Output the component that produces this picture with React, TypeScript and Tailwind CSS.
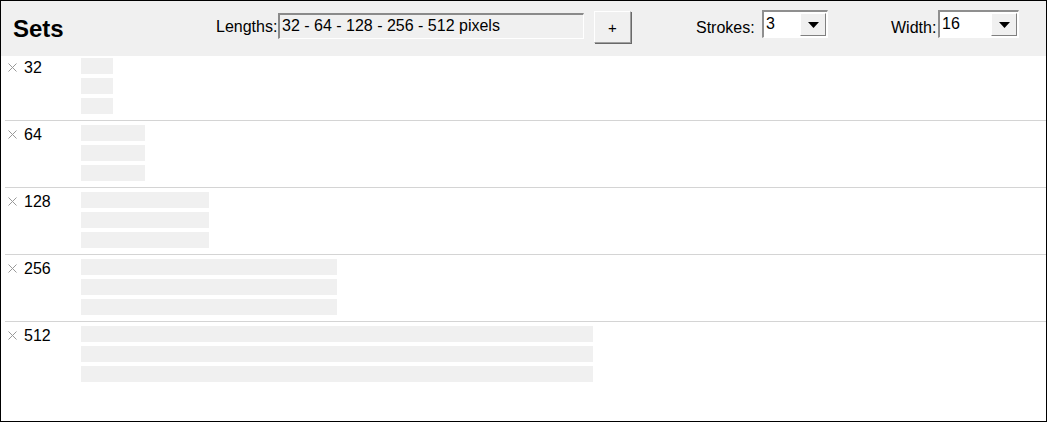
import React from 'react';

const sets = [32, 64, 128, 256, 512];

const font = { fontFamily: '"Liberation Sans", Arial, sans-serif' };

const Cross = () => (
  <svg width="9" height="9" viewBox="0 0 9 9" className="shrink-0">
    <path d="M0.5 0.5 L8.5 8.5 M8.5 0.5 L0.5 8.5" stroke="#999" strokeWidth="1" fill="none" />
  </svg>
);

const Select: React.FC<{ value: string; width: string }> = ({ value, width }) => (
  <div
    className={`${width} h-[28px] flex items-stretch bg-white border-t-2 border-l-2 border-t-[#8f8f8f] border-l-[#8f8f8f] border-b border-r border-b-white border-r-white`}
  >
    <span className="flex-1 pl-[2px] text-[16px] leading-[24px] text-black">{value}</span>
    <div className="w-[26px] my-px mr-px flex items-center justify-center bg-[#f0f0f0] border border-t-white border-l-white border-r-[#808080] border-b-[#808080]">
      <svg width="11" height="6" viewBox="0 0 11 6">
        <path d="M0 0 H11 L5.5 6 Z" fill="#000" />
      </svg>
    </div>
  </div>
);

export default function App() {
  return (
    <div style={font} className="w-[1047px] h-[422px] border border-black bg-white text-black overflow-hidden">
      {/* toolbar */}
      <div className="h-[55px] bg-[#f0f0f0] flex items-start">
        <div className="w-[215px] pl-[12px] pt-[14px] text-[24px] font-bold leading-[28px]">Sets</div>
        <div className="w-[62px] mt-[17px] text-[16px] leading-[18px] whitespace-nowrap">Lengths:</div>
        <div className="w-[306px] h-[26px] mt-[12px] bg-[#f0f0f0] border-t-2 border-l-2 border-t-[#8a8a8a] border-l-[#8a8a8a] border-b border-r border-b-white border-r-white pl-[2px] text-[16px] leading-[22px] whitespace-nowrap">
          32 - 64 - 128 - 256 - 512 pixels
        </div>
        <button className="ml-[10px] mt-[10px] w-[37px] h-[32px] bg-[#f0f0f0] border border-t-white border-l-white border-r-[#a0a0a0] border-b-[#a0a0a0] shadow-[1px_1px_0_#696969] text-[15px] leading-none">
          +
        </button>
        <div className="ml-[65px] w-[66px] mt-[18px] text-[16px] leading-[18px]">Strokes:</div>
        <div className="mt-[9px]">
          <Select value="3" width="w-[66px]" />
        </div>
        <div className="ml-[63px] w-[47px] mt-[18px] text-[16px] leading-[18px]">Width:</div>
        <div className="mt-[9px]">
          <Select value="16" width="w-[81px]" />
        </div>
      </div>

      {/* set rows */}
      <div className="ml-[4px]">
        {sets.map((len, i) => (
          <div
            key={len}
            className={`flex pb-[6px] ${i === 0 ? 'pt-[2px]' : 'pt-[4px] border-t border-[#d4d4d4]'}`}
          >
            <div className="w-[76px] flex items-start">
              <div className="ml-[3px] mt-[5px]">
                <Cross />
              </div>
              <span className="ml-[7px] mt-px text-[16px] leading-[18px]">{len}</span>
            </div>
            <div className="flex flex-col gap-[4px]">
              {[0, 1, 2].map((k) => (
                <div key={k} style={{ width: len }} className="h-[16px] bg-[#f0f0f0]" />
              ))}
            </div>
          </div>
        ))}
      </div>
    </div>
  );
}
